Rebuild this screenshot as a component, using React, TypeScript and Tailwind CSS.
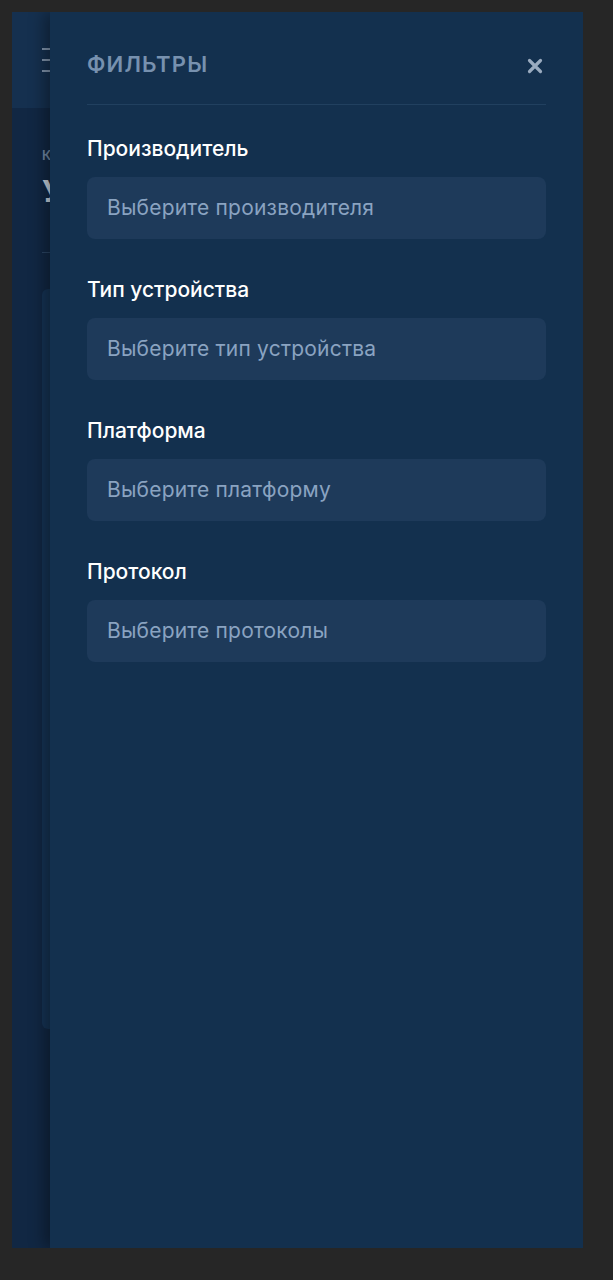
import React from "react";

const fields = [
  { label: "Производитель", placeholder: "Выберите производителя" },
  { label: "Тип устройства", placeholder: "Выберите тип устройства" },
  { label: "Платформа", placeholder: "Выберите платформу" },
  { label: "Протокол", placeholder: "Выберите протоколы" },
];

export default function App() {
  return (
    <div
      className="min-h-[1280px] w-full bg-[#262626] pl-[12px] pr-[30px] pt-[12px] pb-[32px]"
      style={{ fontFamily: 'Inter, "Noto Sans", sans-serif' }}
    >
      <div className="relative h-[1236px] w-[571px] overflow-hidden bg-[#112640]">
        {/* underlying page */}
        <div className="flex h-full flex-col">
          <div className="flex h-[96px] items-center bg-[#15304f] pl-[30px]">
            <div className="flex flex-col gap-[9px]">
              <div className="h-[2px] w-[12px] bg-[#7f93ab]" />
              <div className="h-[2px] w-[12px] bg-[#7f93ab]" />
              <div className="h-[2px] w-[12px] bg-[#7f93ab]" />
            </div>
          </div>
          <div className="flex flex-1 flex-col bg-[#112743] pl-[30px]">
            <div className="mt-[38px] text-[13px] font-semibold text-[#6f86a2]">К</div>
            <div className="mt-[10px] text-[30px] font-bold leading-none text-[#c9d3de]">У</div>
            <div className="mt-[46px] h-px w-full bg-[#2a4463]" />
            <div className="mt-[36px] h-[740px] w-full rounded-[6px] bg-[#153354]" />
          </div>
        </div>

        {/* drawer */}
        <div className="absolute right-0 top-0 bottom-0 w-[533px] bg-[#13304e] px-[37px] shadow-[-6px_0_14px_rgba(0,0,0,0.35)]">
          <div className="flex h-[93px] items-center justify-between border-b border-[#21405f] pt-[12px]">
            <div className="text-[22px] font-semibold leading-none tracking-[1.2px] text-[#7791af]">ФИЛЬТРЫ</div>
            <svg width="16" height="16" viewBox="0 0 16 16" className="mr-[3px] mt-[4px]">
              <path d="M2.5 2.5 L13.5 13.5 M13.5 2.5 L2.5 13.5" stroke="#9aabbf" strokeWidth="3.2" strokeLinecap="round" />
            </svg>
          </div>
          <div className="flex flex-col gap-[36px] pt-[29px]">
            {fields.map((f) => (
              <div key={f.label} className="flex flex-col">
                <div className="h-[29px] text-[21px] font-medium leading-[29px] text-white">
                  {f.label}
                </div>
                <div className="mt-[14px] flex h-[62px] items-center rounded-[8px] bg-[#1e3a5a] px-[20px] text-[21px] tracking-[0.2px] text-[#8aa3c1]">
                  {f.placeholder}
                </div>
              </div>
            ))}
          </div>
        </div>
      </div>
    </div>
  );
}
